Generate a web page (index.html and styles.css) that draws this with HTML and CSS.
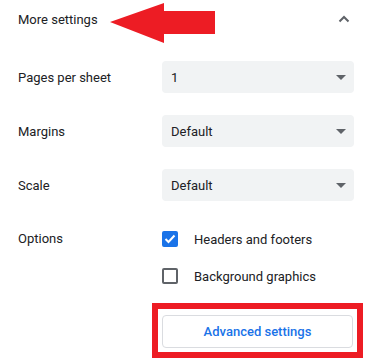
FILE: index.html
```html
<!DOCTYPE html>
<html lang="en">
<head>
    <meta charset="UTF-8">
    <meta name="viewport" content="width=device-width, initial-scale=1.0">
    <title>More settings</title>
    <link rel="stylesheet" href="styles.css">
</head>
<body>
    <div class="panel">
        <div class="header">
            <span class="header-title">More settings</span>
            <svg class="chevron" width="12" height="8" viewBox="0 0 12 8">
                <polyline points="1.5,6.5 6,2 10.5,6.5" fill="none" stroke="#5f6368" stroke-width="2"/>
            </svg>
        </div>

        <div class="row">
            <div class="label">Pages per sheet</div>
            <div class="select"><span>1</span><span class="caret"></span></div>
        </div>
        <div class="row">
            <div class="label">Margins</div>
            <div class="select"><span>Default</span><span class="caret"></span></div>
        </div>
        <div class="row">
            <div class="label">Scale</div>
            <div class="select"><span>Default</span><span class="caret"></span></div>
        </div>

        <div class="row options">
            <div class="label">Options</div>
            <div class="checks">
                <label class="check">
                    <span class="box checked">
                        <svg width="12" height="10" viewBox="0 0 12 10">
                            <polyline points="1.5,5 4.5,8 10.5,1.5" fill="none" stroke="#fff" stroke-width="2"/>
                        </svg>
                    </span>
                    Headers and footers
                </label>
                <label class="check">
                    <span class="box"></span>
                    Background graphics
                </label>
            </div>
        </div>

        <div class="highlight">
            <button class="advanced">Advanced settings</button>
        </div>
    </div>

    <!-- annotation arrow -->
    <svg class="arrow" width="371" height="50" viewBox="0 0 371 50">
        <polygon points="110,22 164,3 164,11 215,11 215,34 164,34 164,43" fill="#ed1c24"/>
    </svg>
</body>
</html>
```

FILE: styles.css
```css
body {
    margin: 0;
    background: #ffffff;
    font-family: Roboto, "Liberation Sans", Arial, sans-serif;
    font-size: 13px;
    color: #202124;
    width: 371px;
    height: 359px;
    overflow: hidden;
    position: relative;
}

.panel {
    padding: 0 17px 0 18px;
}

.header {
    height: 39px;
    display: flex;
    align-items: center;
    justify-content: space-between;
    padding-right: 4px;
}

.header-title {
    color: #202124;
}

.chevron {
    margin-top: -2px;
}

.row {
    display: flex;
    align-items: center;
    margin-top: 22px;
}

.label {
    width: 144px;
    flex-shrink: 0;
}

.select {
    flex: 1;
    height: 32px;
    background: #f1f3f4;
    border-radius: 4px;
    display: flex;
    align-items: center;
    justify-content: space-between;
    padding: 0 8px 0 9px;
}

.caret {
    width: 0;
    height: 0;
    border-left: 5px solid transparent;
    border-right: 5px solid transparent;
    border-top: 5px solid #5f6368;
}

.row.options {
    align-items: flex-start;
    margin-top: 30px;
}

.row.options .label {
    line-height: 16px;
}

.checks {
    display: flex;
    flex-direction: column;
    gap: 21px;
}

.check {
    display: flex;
    align-items: center;
    height: 16px;
    gap: 16px;
}

.box {
    width: 16px;
    height: 16px;
    box-sizing: border-box;
    border: 2px solid #5f6368;
    border-radius: 2px;
    display: flex;
    align-items: center;
    justify-content: center;
}

.box.checked {
    background: #1a73e8;
    border-color: #1a73e8;
}

.highlight {
    margin: 19px 0 0 134px;
    width: 191px;
    border: 6px solid #ed1c24;
    padding: 6px 4px 4px 4px;
}

.advanced {
    display: block;
    width: 100%;
    height: 33px;
    background: #ffffff;
    border: 1px solid #dadce0;
    border-radius: 4px;
    color: #1a73e8;
    font-family: Roboto, "Liberation Sans", Arial, sans-serif;
    font-size: 13px;
    font-weight: 500;
}

.arrow {
    position: absolute;
    left: 0;
    top: 0;
}
```
